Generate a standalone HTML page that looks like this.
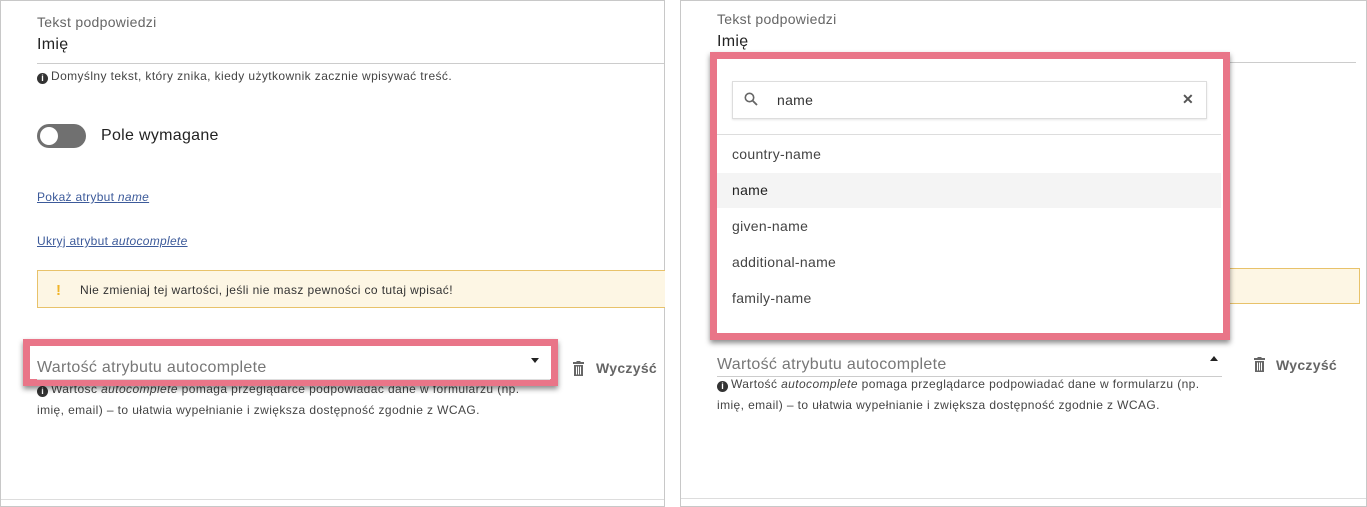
<!DOCTYPE html>
<html><head><meta charset="utf-8"><style>
*{box-sizing:border-box;margin:0;padding:0}
body{width:1367px;height:507px;background:#fff;font-family:"Liberation Sans",sans-serif;position:relative;overflow:hidden;color:#333;letter-spacing:0.3px}
.a{position:absolute;white-space:nowrap}
.panel{position:absolute;top:0;height:507px;border:1px solid #c8c8c8;background:#fff}
.lbl{font-size:14px;color:#666}
.val{font-size:16px;color:#222}
.help{font-size:12px;color:#444;letter-spacing:0.4px}
.info{display:inline-block;width:11px;height:11px;border-radius:50%;background:#333;color:#fff;font-size:9px;line-height:11px;text-align:center;font-weight:bold;vertical-align:-1px;margin-right:3px;letter-spacing:0}
.link{font-size:12px;color:#3c5a9a;text-decoration:underline}
.pink{position:absolute;border:7px solid #e97588;box-shadow:0 3px 5px rgba(0,0,0,.45)}
</style></head><body>
<div class="panel" style="left:0;width:665px"></div>
<div class="panel" style="left:680px;width:687px"></div>
<div class="a" style="left:1px;top:499px;width:663px;height:1px;background:#ddd"></div>
<div class="a" style="left:681px;top:498px;width:685px;height:1px;background:#ddd"></div>

<!-- left -->
<div class="a lbl" style="left:37px;top:14px">Tekst podpowiedzi</div>
<div class="a val" style="left:37px;top:36px">Imię</div>
<div class="a" style="left:37px;top:63px;width:627px;height:1px;background:#ccc"></div>
<div class="a help" style="left:37px;top:69px"><span class="info">i</span>Domyślny tekst, który znika, kiedy użytkownik zacznie wpisywać treść.</div>
<div class="a" style="left:37px;top:124px;width:49px;height:24px;border-radius:12px;background:#707070"></div>
<div class="a" style="left:40px;top:127px;width:18px;height:18px;border-radius:50%;background:#fff"></div>
<div class="a val" style="left:101px;top:127px">Pole wymagane</div>
<div class="a link" style="left:37px;top:190px">Pokaż atrybut <i>name</i></div>
<div class="a link" style="left:37px;top:234px">Ukryj atrybut <i>autocomplete</i></div>
<div class="a" style="left:37px;top:270px;width:628px;height:38px;background:#fdf6e4;border:1px solid #e8c26a;border-right:none"></div>
<div class="a" style="left:56px;top:282px;color:#f0b429;font-weight:bold;font-size:15px">!</div>
<div class="a help" style="left:80px;top:283px;color:#333">Nie zmieniaj tej wartości, jeśli nie masz pewności co tutaj wpisać!</div>
<div class="a help" style="left:37px;top:379px;line-height:21px;white-space:normal;width:505px"><span class="info">i</span>Wartość <i>autocomplete</i> pomaga przeglądarce podpowiadać dane w formularzu (np. imię, email) – to ułatwia wypełnianie i zwiększa dostępność zgodnie z WCAG.</div>
<div class="pink" style="left:23px;top:339px;width:535px;height:47px;background:#fff"></div>
<div class="a" style="left:37px;top:359px;font-size:16px;color:#777">Wartość atrybutu autocomplete</div>
<div class="a" style="left:37px;top:379px;width:513px;height:1px;background:#ddd"></div>
<div class="a" style="left:531px;top:358px;border-left:4px solid transparent;border-right:4px solid transparent;border-top:5px solid #222"></div>
<svg class="a" style="left:572px;top:361px" width="13" height="15" viewBox="0 0 13 15"><rect x="1" y="1" width="11" height="2" fill="#666"/><rect x="4.5" y="0" width="4" height="2" fill="#666"/><path d="M2 4h9v11H2z" fill="#666"/><path d="M4.5 5.5v8M6.5 5.5v8M8.5 5.5v8" stroke="#fff" stroke-width="1"/></svg>
<div class="a" style="left:596px;top:360px;font-size:14px;font-weight:bold;color:#666">Wyczyść</div>

<!-- right -->
<div class="a lbl" style="left:717px;top:11px">Tekst podpowiedzi</div>
<div class="a val" style="left:717px;top:33px">Imię</div>
<div class="a" style="left:717px;top:62px;width:639px;height:1px;background:#ccc"></div>
<div class="a" style="left:1222px;top:268px;width:138px;height:36px;background:#fdf6e4;border:1px solid #e8c26a;border-left:none"></div>
<div class="a" style="left:717px;top:356px;font-size:16px;color:#777">Wartość atrybutu autocomplete</div>
<div class="a" style="left:717px;top:376px;width:505px;height:1px;background:#ccc"></div>
<div class="a" style="left:1210px;top:356px;border-left:4px solid transparent;border-right:4px solid transparent;border-bottom:5px solid #222"></div>
<svg class="a" style="left:1253px;top:357px" width="13" height="15" viewBox="0 0 13 15"><rect x="1" y="1" width="11" height="2" fill="#666"/><rect x="4.5" y="0" width="4" height="2" fill="#666"/><path d="M2 4h9v11H2z" fill="#666"/><path d="M4.5 5.5v8M6.5 5.5v8M8.5 5.5v8" stroke="#fff" stroke-width="1"/></svg>
<div class="a" style="left:1276px;top:357px;font-size:14px;font-weight:bold;color:#666">Wyczyść</div>
<div class="a help" style="left:717px;top:374px;line-height:21px;white-space:normal;width:505px"><span class="info">i</span>Wartość <i>autocomplete</i> pomaga przeglądarce podpowiadać dane w formularzu (np. imię, email) – to ułatwia wypełnianie i zwiększa dostępność zgodnie z WCAG.</div>

<div class="pink" style="left:710px;top:52px;width:520px;height:288px;background:#fff"></div>
<div class="a" style="left:732px;top:81px;width:475px;height:38px;border:1px solid #ddd;box-shadow:0 1px 2px rgba(0,0,0,.1)"></div>
<svg class="a" style="left:744px;top:92px" width="14" height="14" viewBox="0 0 14 14"><circle cx="5.5" cy="5.5" r="4.2" fill="none" stroke="#666" stroke-width="1.6"/><path d="M8.6 8.6L13 13" stroke="#666" stroke-width="1.8"/></svg>
<div class="a" style="left:777px;top:92px;font-size:14px;color:#333">name</div>
<div class="a" style="left:1182px;top:91px;font-size:14px;font-weight:bold;color:#555">✕</div>
<div class="a" style="left:717px;top:134px;width:504px;height:1px;background:#ddd"></div>
<div class="a" style="left:717px;top:173px;width:504px;height:35px;background:#f4f4f4"></div>
<div class="a" style="left:732px;top:146px;font-size:14px;color:#444">country-name</div>
<div class="a" style="left:732px;top:182px;font-size:14px;color:#222">name</div>
<div class="a" style="left:732px;top:218px;font-size:14px;color:#444">given-name</div>
<div class="a" style="left:732px;top:254px;font-size:14px;color:#444">additional-name</div>
<div class="a" style="left:732px;top:290px;font-size:14px;color:#444">family-name</div>
</body></html>
